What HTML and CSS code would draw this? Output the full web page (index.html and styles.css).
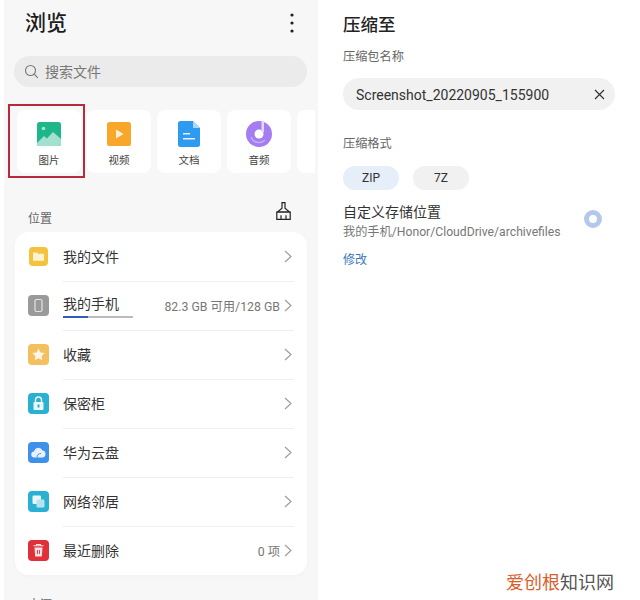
FILE: index.html
```html
<!DOCTYPE html>
<html lang="zh">
<head>
<meta charset="utf-8">
<title>浏览</title>
<link rel="stylesheet" href="styles.css">
</head>
<body>
<main class="page">
  <section class="browse">
    <header class="browse-head">
      <h1 class="browse-title">浏览</h1>
      <svg class="more" width="4" height="20" viewBox="0 0 4 20"><circle cx="2" cy="2" r="1.6"/><circle cx="2" cy="10" r="1.6"/><circle cx="2" cy="18" r="1.6"/></svg>
    </header>
    <div class="search">
      <svg width="15" height="15" viewBox="0 0 15 15" fill="none" stroke="#777" stroke-width="1.1"><circle cx="6.5" cy="6.5" r="5"/><path d="M10.2 10.2l3.6 3.6"/></svg>
      <span class="search-text">搜索文件</span>
    </div>
    <div class="tiles">
      <div class="tile">
        <svg width="24" height="24" viewBox="0 0 24 24"><rect width="24" height="24" rx="2.5" fill="#1fb68c"/><circle cx="6.500" cy="6.500" r="1.800" fill="#a5e6d2"/><path d="M0 21l7-7 3 2.500L16 10l8 7v4.500a2.500 2.500 0 0 1-2.500 2.500h-19A2.500 2.500 0 0 1 0 21.500z" fill="#a3e0cf"/></svg>
        <span>图片</span>
      </div>
      <div class="tile">
        <svg width="24" height="24" viewBox="0 0 24 24"><rect width="24" height="24" rx="2.500" fill="#f9a72b"/><path d="M9 7.500l7.500 4.500L9 16.500z" fill="#fdf0d8"/></svg>
        <span>视频</span>
      </div>
      <div class="tile">
        <svg width="22" height="26" viewBox="0 0 22 26"><path d="M2.500 0H15l7 7v16.500a2.500 2.500 0 0 1-2.500 2.500h-17A2.500 2.500 0 0 1 0 23.500v-21A2.500 2.500 0 0 1 2.500 0z" fill="#2f9bf0"/><path d="M15 0l7 7h-7z" fill="#a9d8fb"/><path d="M5 12h7v1.500H5zM5 17h12v1.500H5z" fill="#e3f2fe"/></svg>
        <span>文档</span>
      </div>
      <div class="tile">
        <svg width="26" height="26" viewBox="0 0 26 26"><circle cx="13" cy="13" r="13" fill="#a47df0"/><path d="M5 16a8.500 8.500 0 0 0 14 3" fill="none" stroke="#c4aef7" stroke-width="1.500"/><circle cx="13" cy="13" r="4.500" fill="#fff"/><path d="M15.500 0h2.500v11h-2.500z" fill="#e4d9fb"/></svg>
        <span>音频</span>
      </div>
      <div class="tile tile-cut"></div>
    </div>
    <div class="tile-mark"></div>
    <div class="section-head">
      <span>位置</span>
      <svg width="15" height="18" viewBox="0 0 15 18" fill="none" stroke="#222" stroke-width="1.200"><path d="M6 .7h3v5.600l4.500 3.700H1.500L6 6.300z"/><path d="M.8 10h13.400v7.300H.8zM5 17.300v-4M10 17.300v-4"/></svg>
    </div>
    <div class="card">
      <div class="row">
        <svg class="ico" width="19" height="19" viewBox="0 0 19 19"><rect width="19" height="19" rx="4" fill="#f3c33c"/><path d="M4 5.500h4l1.200 1.300H15v7H4z" fill="#fdf3d3"/></svg>
        <span class="row-label">我的文件</span>
        <svg class="chev" width="8" height="13" viewBox="0 0 8 13" fill="none" stroke="#999" stroke-width="1.100"><path d="M1 1l6 5.500L1 12"/></svg>
      </div>
      <div class="row">
        <svg class="ico ico-lg" width="21" height="21" viewBox="0 0 21 21"><rect width="21" height="21" rx="4" fill="#9a9a9a"/><rect x="7" y="4.500" width="7" height="12" rx="1.500" fill="none" stroke="#e4e4e4" stroke-width="1.200"/></svg>
        <div class="row-phone">
          <span class="row-label">我的手机</span>
          <div class="bar"><div class="bar-fill"></div></div>
        </div>
        <span class="row-note">82.3 GB 可用/128 GB</span>
        <svg class="chev" width="8" height="13" viewBox="0 0 8 13" fill="none" stroke="#999" stroke-width="1.100"><path d="M1 1l6 5.500L1 12"/></svg>
      </div>
      <div class="row">
        <svg class="ico ico-lg" width="21" height="21" viewBox="0 0 21 21"><rect width="21" height="21" rx="4" fill="#f4bf5e"/><path d="M10.500 4.500l1.900 3.900 4.300.6-3.100 3 .7 4.300-3.800-2-3.800 2 .7-4.300-3.100-3 4.300-.6z" fill="#fdf6e6"/></svg>
        <span class="row-label">收藏</span>
        <svg class="chev" width="8" height="13" viewBox="0 0 8 13" fill="none" stroke="#999" stroke-width="1.100"><path d="M1 1l6 5.500L1 12"/></svg>
      </div>
      <div class="row">
        <svg class="ico ico-lg" width="21" height="21" viewBox="0 0 21 21"><rect width="21" height="21" rx="4" fill="#2ab0d2"/><rect x="5.500" y="9" width="10" height="8" rx="1" fill="#eaf8fb"/><path d="M7.500 9V7a3 3 0 0 1 6 0v2" fill="none" stroke="#eaf8fb" stroke-width="1.400"/><rect x="9.500" y="11.500" width="2" height="3" fill="#2ab0d2"/></svg>
        <span class="row-label">保密柜</span>
        <svg class="chev" width="8" height="13" viewBox="0 0 8 13" fill="none" stroke="#999" stroke-width="1.100"><path d="M1 1l6 5.500L1 12"/></svg>
      </div>
      <div class="row">
        <svg class="ico ico-lg" width="21" height="21" viewBox="0 0 21 21"><rect width="21" height="21" rx="4" fill="#3f90e8"/><path d="M6.500 15.500a3 3 0 0 1-.5-6 4.500 4.500 0 0 1 8.500-1 3.600 3.600 0 0 1 .5 7z" fill="#e6f1fc"/><path d="M9 15.500c0-2.500 1.500-4 4-4" fill="none" stroke="#3f90e8" stroke-width="1"/></svg>
        <span class="row-label">华为云盘</span>
        <svg class="chev" width="8" height="13" viewBox="0 0 8 13" fill="none" stroke="#999" stroke-width="1.100"><path d="M1 1l6 5.500L1 12"/></svg>
      </div>
      <div class="row">
        <svg class="ico ico-lg" width="21" height="21" viewBox="0 0 21 21"><rect width="21" height="21" rx="4" fill="#2ab0d2"/><rect x="4.500" y="4.500" width="8.500" height="8.500" rx="1.200" fill="#eaf8fb"/><rect x="8.500" y="8.500" width="8" height="8" rx="1.200" fill="#b5e4f0"/></svg>
        <span class="row-label">网络邻居</span>
        <svg class="chev" width="8" height="13" viewBox="0 0 8 13" fill="none" stroke="#999" stroke-width="1.100"><path d="M1 1l6 5.500L1 12"/></svg>
      </div>
      <div class="row">
        <svg class="ico ico-lg" width="21" height="21" viewBox="0 0 21 21"><rect width="21" height="21" rx="4" fill="#e0303a"/><path d="M6.500 7.500h8l-.7 9h-6.600z" fill="#fbe4e4"/><path d="M5.500 5.800h10M8.500 5.500V4.500h4v1" fill="none" stroke="#fbe4e4" stroke-width="1.100"/><path d="M9.500 10v4M11.500 10v4" stroke="#e0303a" stroke-width=".9"/></svg>
        <span class="row-label">最近删除</span>
        <span class="row-note">0 项</span>
        <svg class="chev" width="8" height="13" viewBox="0 0 8 13" fill="none" stroke="#999" stroke-width="1.100"><path d="M1 1l6 5.500L1 12"/></svg>
      </div>
    </div>
    <div class="section-next">来源</div>
  </section>
  <section class="compress">
    <h2 class="compress-title">压缩至</h2>
    <div class="field-label">压缩包名称</div>
    <div class="name-input">
      <span class="name-text">Screenshot_20220905_155900</span>
      <svg width="11" height="11" viewBox="0 0 11 11" stroke="#333" stroke-width="1.200"><path d="M1 1l9 9M10 1l-9 9"/></svg>
    </div>
    <div class="field-label format-label">压缩格式</div>
    <div class="formats">
      <span class="chip chip-on">ZIP</span>
      <span class="chip">7Z</span>
    </div>
    <div class="custom">
      <div class="custom-text">
        <div class="custom-title">自定义存储位置</div>
        <div class="custom-path">我的手机/Honor/CloudDrive/archivefiles</div>
      </div>
      <span class="radio"></span>
    </div>
    <div class="edit">修改</div>
  </section>
</main>
<div class="watermark"><span class="wm-a">爱创根</span><span class="wm-b">知识网</span></div>
</body>
</html>
```
FILE: styles.css
```css
* { box-sizing: border-box; }
html, body { margin: 0; height: 100%; }
body {
  background: #fff;
  font-family: "Roboto", "Noto Sans CJK SC", sans-serif;
  overflow: hidden;
  position: relative;
}
.page { display: flex; height: 600px; padding-left: 4px; }
.browse {
  width: 314px;
  height: 600px;
  background: #f7f7f7;
  padding: 0 10px;
  position: relative;
  overflow: hidden;
  flex: none;
}
.browse-head {
  display: flex;
  justify-content: space-between;
  align-items: center;
  height: 45px;
  padding: 0 14px 0 11px;
}
.browse-title { margin: 0 0 3px; font-size: 21px; font-weight: 500; color: #1c1c1c; }
.more { fill: #222; }
.search {
  margin-top: 11px;
  height: 31px;
  width: 293px;
  border-radius: 16px;
  background: #ebebeb;
  display: flex;
  align-items: center;
  gap: 6px;
  padding-left: 10px;
  font-size: 14px;
  color: #777;
}
.search-text { margin-bottom: 2px; }
.tiles {
  margin-top: 23px;
  display: flex;
  gap: 6px;
  width: 298px;
  overflow: hidden;
  margin-left: 3px;
}
.tile {
  flex: none;
  width: 64px;
  height: 63px;
  background: #fff;
  border-radius: 8px;
  display: flex;
  flex-direction: column;
  align-items: center;
  font-size: 10.500px;
  color: #444;
  padding-top: 11px;
  position: relative;
}
.tile svg { height: 26px; }
.tile span { position: absolute; top: 42px; }
.tile-mark {
  position: absolute;
  left: 4px;
  top: 104px;
  width: 77px;
  height: 74px;
  border: 2px solid #b8293d;
}
.section-head {
  margin-top: 29px;
  display: flex;
  justify-content: space-between;
  align-items: flex-end;
  padding: 0 17px 0 14px;
  height: 28px;
  font-size: 12px;
  color: #666;
}
.section-head svg { margin-bottom: 10px; }
.section-head span { margin-bottom: 2px; line-height: 18px; }
.card {
  margin: 2px 0 0 1px;
  width: 292px;
  background: #fff;
  border-radius: 14px;
  height: 343px;
  box-shadow: 0 2px 6px rgba(0, 0, 0, .02);
}
.row {
  height: 49px;
  display: flex;
  align-items: center;
  padding: 0 15px 0 13px;
  position: relative;
}
.row + .row::before {
  content: "";
  position: absolute;
  left: 48px;
  right: 13px;
  top: 0;
  border-top: 1px solid #efefef;
}
.ico { flex: none; margin: 0 15px 0 1px; }
.ico-lg { margin: 0 14px 0 0; }
.row-label { font-size: 14px; color: #333; flex: 1; padding-bottom: 2px; }
.row-phone { flex: 1; position: relative; padding-bottom: 3px; }
.row-phone .row-label { display: block; line-height: 20px; padding: 0; }
.bar {
  width: 70px;
  height: 2px;
  background: #bbb;
  position: absolute;
  left: 0;
  top: 22px;
}
.bar-fill { width: 25px; height: 2px; background: #2f5fb3; }
.row-note { font-size: 12.300px; color: #777; margin-right: 4px; }
.chev { flex: none; }
.section-next { margin: 20px 0 0 14px; font-size: 12px; color: #666; }
.compress { flex: 1; padding: 15px 25px 0; min-width: 0; }
.compress-title { margin: 0; font-size: 17.500px; font-weight: 500; color: #222; line-height: 20px; }
.field-label { font-size: 12.200px; color: #666; margin-top: 13px; line-height: 18px; }
.name-input {
  margin-top: 12px;
  height: 32px;
  border-radius: 16px;
  background: #f1f1f1;
  display: flex;
  align-items: center;
  justify-content: space-between;
  padding: 0 10px 0 13px;
  font-size: 14px;
  color: #333;
}
.name-text { padding-top: 2px; }
.format-label { margin-top: 25px; }
.formats { display: flex; gap: 14px; margin-top: 13px; }
.chip {
  width: 56px;
  height: 24px;
  border-radius: 12px;
  background: #f1f1f1;
  display: flex;
  align-items: center;
  justify-content: center;
  font-size: 12px;
  color: #333;
}
.chip-on { background: #e6eefa; }
.custom { display: flex; align-items: center; justify-content: space-between; margin-top: 12px; padding-right: 13px; }
.custom-title { font-size: 14px; color: #333; line-height: 21px; }
.custom-path { font-size: 12.200px; color: #777; line-height: 19px; }
.radio {
  width: 18px;
  height: 18px;
  border-radius: 50%;
  border: 5px solid #b3c8ec;
  background: #fff;
  margin-top: -6px;
}
.edit { font-size: 12px; color: #3a78bd; margin-top: 9px; line-height: 18px; }
.watermark {
  position: absolute;
  right: 26px;
  bottom: 8px;
  font-size: 18px;
  line-height: 22px;
  font-family: "Noto Sans CJK SC", sans-serif;
}
.wm-a { color: #d9602e; }
.wm-b { color: #555; }
```
